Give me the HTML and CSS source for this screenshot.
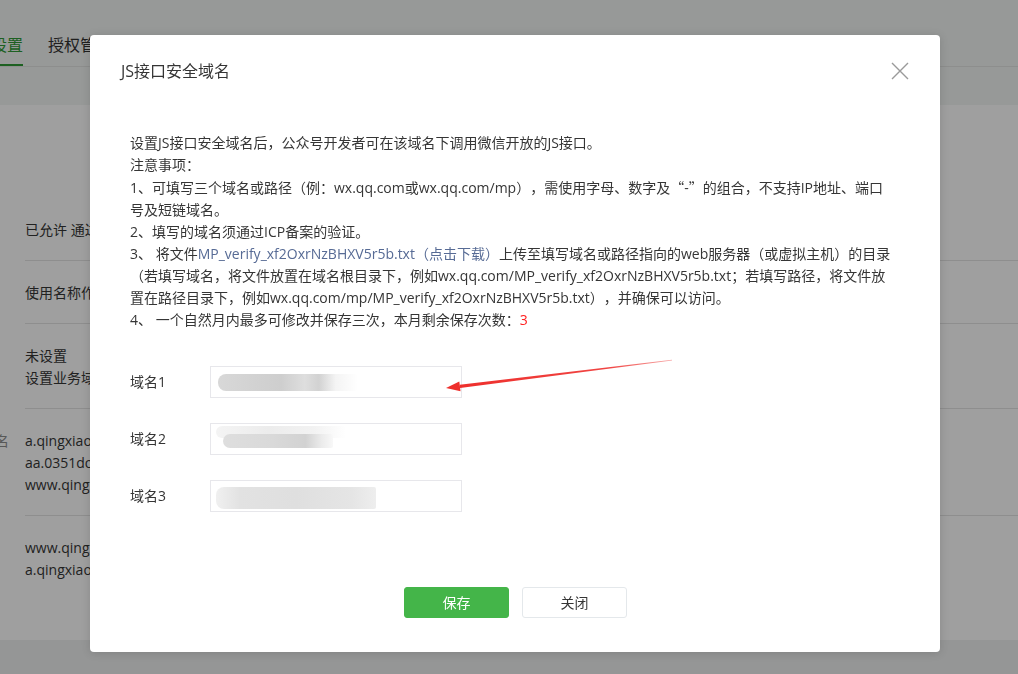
FILE: index.html
```html
<!DOCTYPE html>
<html lang="zh-CN">
<head>
<meta charset="utf-8">
<title>JS接口安全域名</title>
<link rel="stylesheet" href="styles.css">
</head>
<body>
<div class="page">
  <header class="top">
    <nav class="tabs">
      <a class="tab active">设置</a>
      <a class="tab">授权管理</a>
    </nav>
  </header>
  <main class="card">
    <div class="row"><div class="lbl"></div><div class="val">已允许 通过网页授权获取用户基本信息</div></div>
    <div class="row"><div class="lbl"></div><div class="val">使用名称作为公众号的显示名称</div></div>
    <div class="row"><div class="lbl"></div><div class="val">未设置<br>设置业务域名后，在微信内访问该域名下页面时</div></div>
    <div class="row"><div class="lbl">JS接口安全域名</div><div class="val">a.qingxiaoshop.com<br>aa.0351doo.com<br>www.qingxiaoshop.com</div></div>
    <div class="row"><div class="lbl"></div><div class="val">www.qingxiaoshop.com<br>a.qingxiaoshop.com</div></div>
  </main>
</div>

<div class="mask"></div>

<section class="dialog">
  <header class="dlg-head">
    <h3 class="dlg-title">JS接口安全域名</h3>
    <button class="dlg-close" aria-label="关闭">
      <svg width="18" height="18" viewBox="0 0 18 18"><path d="M1 1L17 17M17 1L1 17" stroke="#9a9a9a" stroke-width="1.4" fill="none"/></svg>
    </button>
  </header>
  <div class="dlg-body">
    <div class="tips">
      <p>设置JS接口安全域名后，公众号开发者可在该域名下调用微信开放的JS接口。</p>
      <p>注意事项：</p>
      <p>1、可填写三个域名或路径（例：wx.qq.com或wx.qq.com/mp），需使用字母、数字及<span class="cjk">“</span>-<span class="cjk">”</span>的组合，不支持IP地址、端口<br>号及短链域名。</p>
      <p>2、填写的域名须通过ICP备案的验证。</p>
      <p>3、 将文件<a class="link">MP_verify_xf2OxrNzBHXV5r5b.txt（点击下载）</a>上传至填写域名或路径指向的web服务器（或虚拟主机）的目录<br>（若填写域名，将文件放置在域名根目录下，例如wx.qq.com/MP_verify_xf2OxrNzBHXV5r5b.txt；若填写路径，将文件放<br>置在路径目录下，例如wx.qq.com/mp/MP_verify_xf2OxrNzBHXV5r5b.txt），并确保可以访问。</p>
      <p>4、 一个自然月内最多可修改并保存三次，本月剩余保存次数：<span class="red">3</span></p>
    </div>
    <div class="form">
      <div class="frow">
        <label class="flabel">域名1</label>
        <div class="input"><span class="blur b1"></span></div>
      </div>
      <div class="frow">
        <label class="flabel">域名2</label>
        <div class="input"><span class="blur b2a"></span><span class="blur b2"></span></div>
      </div>
      <div class="frow">
        <label class="flabel">域名3</label>
        <div class="input"><span class="blur b3"></span></div>
      </div>
    </div>
  </div>
  <footer class="dlg-foot">
    <button class="btn btn-primary">保存</button>
    <button class="btn btn-default">关闭</button>
  </footer>
  <svg class="arrow" width="240" height="42" viewBox="0 0 240 42">
    <defs>
      <linearGradient id="ag" x1="0" y1="0" x2="1" y2="0">
        <stop offset="0" stop-color="#ee2f2c"/>
        <stop offset="0.7" stop-color="#f04543"/>
        <stop offset="1" stop-color="#f7a9a8"/>
      </linearGradient>
    </defs>
    <polygon points="20.1,34.9 19.7,31.7 232,6.7 232.1,7.4" fill="url(#ag)"/>
    <polygon points="6,35 20.5,38.2 19.3,28.4" fill="#ee2f2c"/>
  </svg>
</section>
</body>
</html>
```

FILE: styles.css
```css
* { box-sizing: border-box; }
html, body { margin: 0; padding: 0; }
body {
  width: 1018px;
  height: 674px;
  overflow: hidden;
  background: #eff1f0;
  font-family: "Open Sans", "Noto Sans CJK SC", sans-serif;
  font-size: 14px;
  color: #353535;
  text-spacing-trim: space-all;
}
.cjk {
  font-family: "Noto Sans CJK SC", sans-serif;
  font-feature-settings: "fwid" 1;
}

/* underlying page */
.page { display: flex; flex-direction: column; }
.top {
  height: 105px;
  background: #f3f6f4;
  padding-top: 34px;
}
.tabs {
  display: flex;
  gap: 25px;
  margin-left: -9px;
  border-bottom: 1px solid #e2e4e3;
  height: 33px;
}
.tab {
  font-size: 16px;
  line-height: 22px;
  color: #333;
  height: 32px;
  display: block;
}
.tab.active {
  color: #2f9a35;
  border-bottom: 2px solid #2f9a35;
}
.card {
  background: #fff;
  height: 535px;
  padding-top: 93px;
  margin-left: -111px;
}
.row { display: flex; gap: 16px; }
.lbl {
  width: 120px;
  text-align: right;
  color: #8d8d8d;
  padding-top: 21px;
  line-height: 22px;
  white-space: nowrap;
}
.val {
  flex: 1;
  line-height: 22px;
  padding: 21px 0 19px;
  border-bottom: 1px solid #e4e4e4;
  white-space: nowrap;
}
.row:last-child .val { border-bottom: none; }

/* mask */
.mask {
  position: fixed;
  inset: 0;
  background: rgba(0, 0, 0, 0.376);
}

/* dialog */
.dialog {
  position: absolute;
  left: 90px;
  top: 35px;
  width: 850px;
  height: 617px;
  background: #fff;
  border-radius: 4px;
  box-shadow: 0 1px 10px rgba(0, 0, 0, 0.14);
  display: flex;
  flex-direction: column;
}
.dlg-head {
  display: flex;
  justify-content: space-between;
  align-items: center;
  padding: 25px 31px 0 31px;
}
.dlg-title {
  margin: 0;
  font-size: 16px;
  font-weight: normal;
  line-height: 22px;
  color: #353535;
}
.dlg-close {
  border: 0;
  background: none;
  padding: 0;
  width: 18px;
  height: 18px;
  display: block;
  cursor: pointer;
}
.dlg-close svg { display: block; }
.dlg-body {
  padding: 50px 40px 0 40px;
}
.tips p {
  margin: 0;
  line-height: 22px;
  white-space: nowrap;
}
.link { color: #576b95; }
.red { color: #ff1f1f; }

.form {
  margin-top: 35px;
  display: flex;
  flex-direction: column;
  gap: 25px;
}
.frow { display: flex; align-items: center; }
.flabel { width: 80px; line-height: 22px; }
.input {
  width: 252px;
  height: 32px;
  border: 1px solid #e7e7eb;
  position: relative;
  overflow: hidden;
}
.blur {
  position: absolute;
  display: block;
  filter: blur(0.6px);
  border-radius: 8px 2px 2px 8px;
}
.b1 {
  left: 7px; top: 7px; width: 140px; height: 17px;
  background: linear-gradient(to right, #d8d8d8 0, #d1d1d1 30%, #cecece 45%, #dedede 62%, #d2d2d2 72%, #f4f4f4 84%, #ffffff 100%);
}
.b2a {
  left: 5px; top: 2px; width: 130px; height: 12px;
  background: linear-gradient(to right, #f4f4f4, #ececec 40%, #f2f2f2 75%, #ffffff);
}
.b2 {
  left: 12px; top: 10px; width: 110px; height: 14px;
  background: linear-gradient(to right, #dedede, #d9d9d9 45%, #d2d2d2 75%, #ececec 90%, #f8f8f8);
}
.b3 {
  left: 5px; top: 6px; width: 160px; height: 22px;
  background: linear-gradient(to right, #f0f0f0, #e2e2e2 15%, #dfdfdf 50%, #e5e5e5 85%, #eeeeee);
}

.dlg-foot {
  margin-top: auto;
  padding-bottom: 34px;
  display: flex;
  justify-content: center;
  gap: 13px;
  padding-left: 1px;
}
.btn {
  width: 105px;
  height: 31px;
  border-radius: 3px;
  font-family: inherit;
  font-size: 14px;
  line-height: 29px;
  padding: 0;
  cursor: pointer;
}
.btn-primary {
  background: #44b549;
  border: 1px solid #44b549;
  color: #fff;
}
.btn-default {
  background: #fff;
  border: 1px solid #e4e8eb;
  color: #353535;
}

.arrow {
  position: absolute;
  left: 350px;
  top: 318px;
}
```
